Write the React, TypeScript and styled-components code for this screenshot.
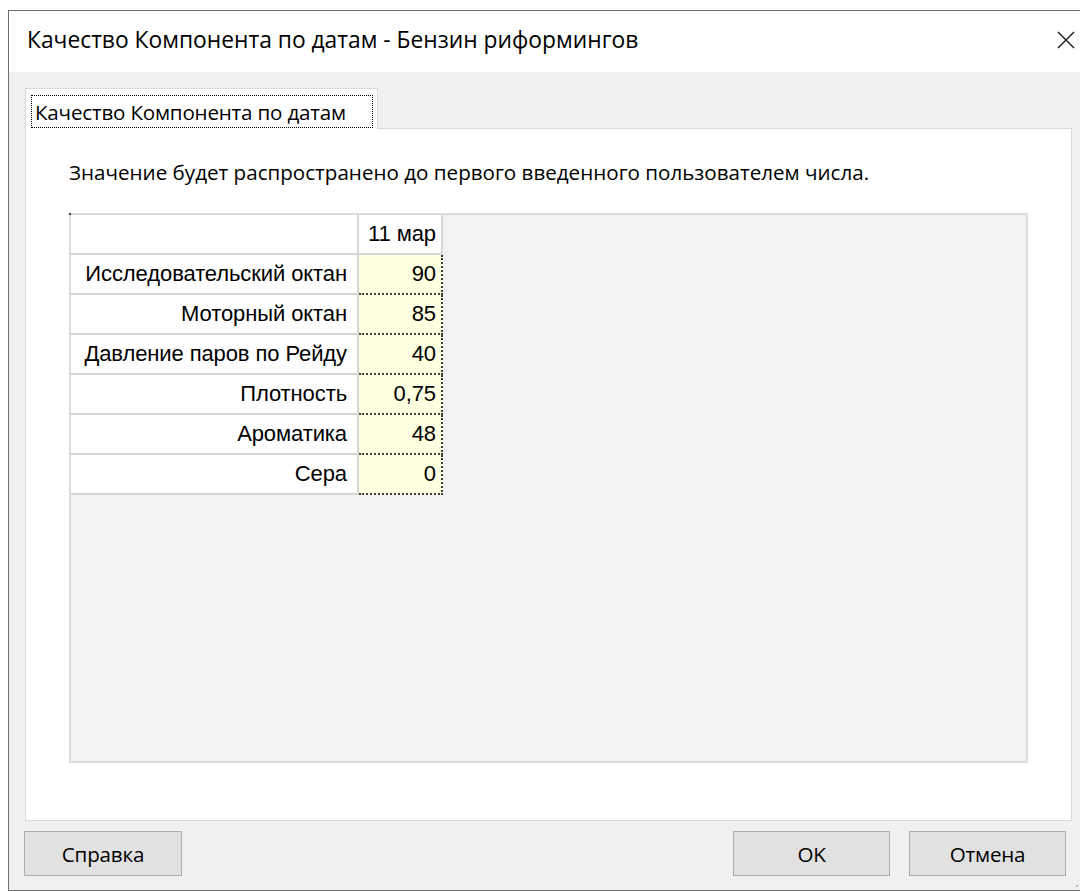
import React from "react";
import styled, { createGlobalStyle } from "styled-components";

const Global = createGlobalStyle`
  html, body { margin: 0; padding: 0; background: #ffffff; overflow: hidden; }
  #root { width: 1080px; height: 891px; }
`;

const Screen = styled.div`
  width: 1080px;
  height: 891px;
  box-sizing: border-box;
  padding: 10px 0 0 8px;
  overflow: hidden;
  background: #ffffff;
`;

const Window = styled.div`
  position: relative;
  width: 1080px;
  height: 881px;
  box-sizing: border-box;
  border: 1px solid #707070;
  border-right: none;
  display: flex;
  flex-direction: column;
  background: #f0f0f0;
  font-family: "Open Sans", "Noto Sans", sans-serif;
  color: #000;
`;

const TitleBar = styled.div`
  height: 61px;
  flex: none;
  display: flex;
  align-items: center;
  justify-content: space-between;
  background: #ffffff;
  padding-left: 18px;
`;

const Title = styled.div`
  font-size: 22.8px;
  line-height: 28px;
  margin-top: -3px;
  white-space: nowrap;
`;

const CloseButton = styled.div`
  width: 44px;
  height: 61px;
  display: flex;
  align-items: center;
  justify-content: center;
  padding-bottom: 4px;
  box-sizing: border-box;
`;

const Body = styled.div`
  flex: 1;
  display: flex;
  flex-direction: column;
  padding: 16px 16px 14px 16px;
  min-height: 0;
`;

const TabStrip = styled.div`
  height: 40px;
  flex: none;
  display: flex;
  align-items: flex-end;
  position: relative;
  z-index: 1;
`;

const Tab = styled.div`
  width: 353px;
  height: 41px;
  box-sizing: border-box;
  background: #ffffff;
  border: 1px solid #d9d9d9;
  border-bottom: none;
  padding: 6px 4px 1px 5px;
  margin-bottom: -1px;
`;

const TabLabel = styled.div`
  height: 33px;
  box-sizing: border-box;
  border: 1px dotted #000;
  display: flex;
  align-items: center;
  padding-left: 3px;
  font-size: 20.6px;
  letter-spacing: -0.2px;
  white-space: nowrap;
`;

const TabPage = styled.div`
  height: 693px;
  flex: none;
  box-sizing: border-box;
  background: #ffffff;
  border: 1px solid #d9d9d9;
  display: flex;
  flex-direction: column;
  padding: 30px 43px 57px 43px;
`;

const Hint = styled.div`
  font-size: 20.6px;
  line-height: 26px;
  height: 54px;
  white-space: nowrap;
`;

const GridBox = styled.div`
  position: relative;
  flex: 1;
  border: 2px solid #dcdcdc;
  background: #f2f2f2;
  &::before {
    content: "";
    position: absolute;
    left: -2px;
    top: -2px;
    width: 2px;
    height: 2px;
    background: #404040;
  }
`;

const Table = styled.div`
  display: grid;
  grid-template-columns: 288px 84px;
  grid-auto-rows: 40px;
  font-family: "Liberation Sans", Arial, sans-serif;
  font-size: 22px;
  letter-spacing: -0.1px;
`;

const LabelCell = styled.div`
  background: #ffffff;
  border-bottom: 2px solid #d6d6d6;
  border-right: 2px solid #d6d6d6;
  display: flex;
  align-items: center;
  justify-content: flex-end;
  padding-right: 10px;
  white-space: nowrap;
`;

const ValueCell = styled.div<{ $head?: boolean }>`
  background: ${(p) => (p.$head ? "#ffffff" : "#ffffe1")};
  border-bottom: 2px ${(p) => (p.$head ? "solid #d6d6d6" : "dotted #3c3c3c")};
  border-right: 2px ${(p) => (p.$head ? "solid #d6d6d6" : "dotted #3c3c3c")};
  display: flex;
  align-items: center;
  justify-content: flex-end;
  padding-right: 5px;
  white-space: nowrap;
`;

const ButtonRow = styled.div`
  display: flex;
  align-items: center;
  margin: 10px 6px 0 -1px;
  height: 45px;
`;

const Button = styled.div<{ $wide?: boolean }>`
  width: ${(p) => (p.$wide ? "158px" : "157px")};
  height: 45px;
  box-sizing: border-box;
  border: 1px solid #adadad;
  background: #e1e1e1;
  display: flex;
  align-items: center;
  justify-content: center;
  font-size: 20.6px;
  letter-spacing: -0.2px;
`;

const Spacer = styled.div`
  flex: 1;
`;

const Gap = styled.div`
  width: 19px;
`;

const Grip = styled.svg`
  position: absolute;
  right: -1px;
  bottom: 1px;
`;

const rows: [string, string][] = [
  ["Исследовательский октан", "90"],
  ["Моторный октан", "85"],
  ["Давление паров по Рейду", "40"],
  ["Плотность", "0,75"],
  ["Ароматика", "48"],
  ["Сера", "0"],
];

const gripDots = [
  [11, 2],
  [11, 7],
  [6, 7],
  [11, 12],
  [6, 12],
  [1, 12],
];

export default function App() {
  return (
    <Screen>
      <Global />
      <Window>
        <TitleBar>
          <Title>Качество Компонента по датам - Бензин риформингов</Title>
          <CloseButton>
            <svg width="18" height="18" viewBox="0 0 18 18">
              <path d="M1 1 L17 17 M17 1 L1 17" stroke="#1a1a1a" strokeWidth="1.4" fill="none" />
            </svg>
          </CloseButton>
        </TitleBar>
        <Body>
          <TabStrip>
            <Tab>
              <TabLabel>Качество Компонента по датам</TabLabel>
            </Tab>
          </TabStrip>
          <TabPage>
            <Hint>Значение будет распространено до первого введенного пользователем числа.</Hint>
            <GridBox>
              <Table>
                <LabelCell />
                <ValueCell $head>11 мар</ValueCell>
                {rows.map(([label, value]) => (
                  <React.Fragment key={label}>
                    <LabelCell>{label}</LabelCell>
                    <ValueCell>{value}</ValueCell>
                  </React.Fragment>
                ))}
              </Table>
            </GridBox>
          </TabPage>
          <ButtonRow>
            <Button $wide>Справка</Button>
            <Spacer />
            <Button>OK</Button>
            <Gap />
            <Button>Отмена</Button>
          </ButtonRow>
        </Body>
        <Grip width="14" height="16" viewBox="0 0 14 16">
          {gripDots.map(([x, y]) => (
            <rect key={`${x}-${y}`} x={x} y={y} width="2" height="2" fill="#b8b8b8" />
          ))}
        </Grip>
      </Window>
    </Screen>
  );
}
